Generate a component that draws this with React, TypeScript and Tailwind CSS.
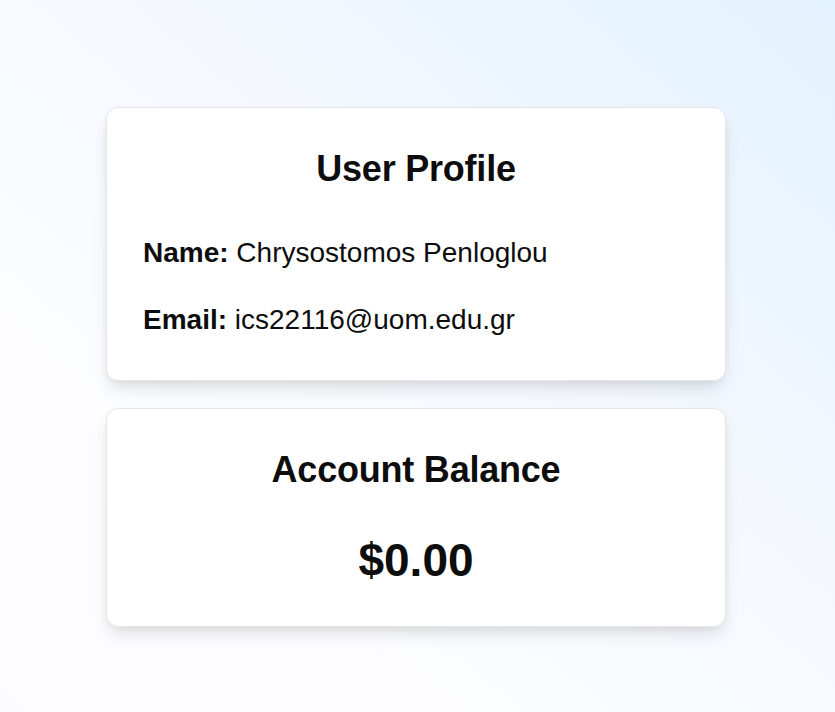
const Card = ({ children, className }: { children: React.ReactNode; className: string }) => {
    return (
        <div className={"w-[620px] bg-white border border-[#e4e6ea] rounded-xl shadow-[0_10px_18px_-4px_rgba(0,0,0,0.12),0_3px_8px_-2px_rgba(0,0,0,0.06)] px-[36px] pt-[41px] " + className}>
            {children}
        </div>
    )
}

const App = () => {
    return (
        <div
            className="min-h-screen w-full flex flex-col items-start gap-[27px] pl-[106px] pt-[107px] pb-10 text-[#0d0d0d] bg-[linear-gradient(to_bottom_left,#e2f2fe_0%,#f4f8fe_40%,#fdfdff_75%,#fcfbff_100%)]"
            style={{ fontFamily: '"Liberation Sans", Arial, sans-serif' }}
        >
            <Card className="pb-[44px]">
                <h2 className="text-[36px] leading-[40px] font-bold text-center tracking-[-0.006em]">User Profile</h2>
                <p className="mt-[48px] text-[28px] leading-[32px]">
                    <span className="font-bold">Name:</span> Chrysostomos Penloglou
                </p>
                <p className="mt-[35px] text-[28px] leading-[32px]">
                    <span className="font-bold">Email:</span> ics22116@uom.edu.gr
                </p>
            </Card>
            <Card className="pb-[40px]">
                <h2 className="text-[36px] leading-[40px] font-bold text-center tracking-[-0.006em]">Account Balance</h2>
                <p className="mt-[44px] text-[46px] leading-[52px] font-bold text-center">$0.00</p>
            </Card>
        </div>
    )
}

export default App;
